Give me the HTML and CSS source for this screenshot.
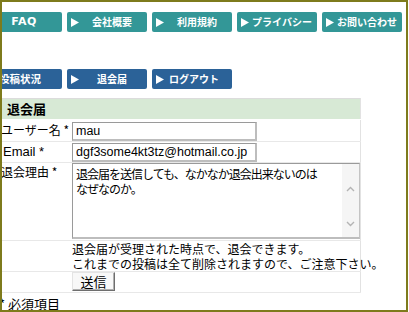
FILE: index.html
```html
<!DOCTYPE html>
<html lang="ja">
<head>
    <meta charset="UTF-8">
    <title>退会届</title>
    <link rel="stylesheet" href="styles.css">
</head>
<body>
    <div class="frame">
        <nav class="menu menu-main">
            <a class="menu-btn btn-teal btn-plain" href="#">FAQ</a>
            <a class="menu-btn btn-teal" href="#">
                <svg class="arrow" width="8" height="9" viewBox="0 0 8 9"><polygon points="0,0 8,4.5 0,9" fill="#fff"/></svg>
                <span class="menu-label">会社概要</span>
            </a>
            <a class="menu-btn btn-teal" href="#">
                <svg class="arrow" width="8" height="9" viewBox="0 0 8 9"><polygon points="0,0 8,4.5 0,9" fill="#fff"/></svg>
                <span class="menu-label">利用規約</span>
            </a>
            <a class="menu-btn btn-teal" href="#">
                <svg class="arrow" width="8" height="9" viewBox="0 0 8 9"><polygon points="0,0 8,4.5 0,9" fill="#fff"/></svg>
                <span class="menu-label">プライバシー</span>
            </a>
            <a class="menu-btn btn-teal" href="#">
                <svg class="arrow" width="8" height="9" viewBox="0 0 8 9"><polygon points="0,0 8,4.5 0,9" fill="#fff"/></svg>
                <span class="menu-label">お問い合わせ</span>
            </a>
        </nav>

        <nav class="menu menu-user">
            <a class="menu-btn btn-blue btn-left btn-first" href="#">
                <svg class="arrow" width="8" height="9" viewBox="0 0 8 9"><polygon points="0,0 8,4.5 0,9" fill="#fff"/></svg>
                <span class="menu-label">投稿状況</span>
            </a>
            <a class="menu-btn btn-blue" href="#">
                <svg class="arrow" width="8" height="9" viewBox="0 0 8 9"><polygon points="0,0 8,4.5 0,9" fill="#fff"/></svg>
                <span class="menu-label">退会届</span>
            </a>
            <a class="menu-btn btn-blue btn-left" href="#">
                <svg class="arrow" width="8" height="9" viewBox="0 0 8 9"><polygon points="0,0 8,4.5 0,9" fill="#fff"/></svg>
                <span class="menu-label">ログアウト</span>
            </a>
        </nav>

        <form class="quit-form" onsubmit="return false">
            <table class="form-table">
                <colgroup>
                    <col class="col-label">
                    <col class="col-field">
                </colgroup>
                <tr>
                    <th class="form-head" colspan="2">退会届</th>
                </tr>
                <tr class="row-user">
                    <td class="field-label">ユーザー名 *</td>
                    <td><input class="text-input" type="text" value="mau"></td>
                </tr>
                <tr class="row-email">
                    <td class="field-label label-latin">Email *</td>
                    <td><input class="text-input" type="text" value="dgf3some4kt3tz@hotmail.co.jp"></td>
                </tr>
                <tr class="row-reason">
                    <td class="field-label">退会理由 *</td>
                    <td>
                        <div class="reason-box">
                            <textarea class="reason-input">退会届を送信しても、なかなか退会出来ないのはな&#8203;ぜなのか。</textarea>
                            <div class="scroll-rail">
                                <svg width="9" height="6" viewBox="0 0 9 6"><path d="M1 5l3.5-3.5L8 5" fill="none" stroke="#b4b4b4" stroke-width="1.4"/></svg>
                                <svg width="9" height="6" viewBox="0 0 9 6"><path d="M1 1l3.5 3.5L8 1" fill="none" stroke="#b4b4b4" stroke-width="1.4"/></svg>
                            </div>
                        </div>
                    </td>
                </tr>
                <tr class="row-note">
                    <td></td>
                    <td class="form-note">
                        退会届が受理された時点で、退会できます。<br>
                        これまでの投稿は全て削除されますので、ご注意下さい。
                    </td>
                </tr>
                <tr class="row-submit">
                    <td></td>
                    <td><button class="submit-btn" type="submit">送信</button></td>
                </tr>
            </table>
            <p class="required-note">* 必須項目</p>
        </form>
    </div>
</body>
</html>
```

FILE: styles.css
```css
* {
    margin: 0;
    padding: 0;
    box-sizing: border-box;
}

body {
    font-family: "Liberation Sans", "Noto Sans CJK JP", sans-serif;
    background: #fff;
    color: #000;
}

.frame {
    width: 408px;
    height: 312px;
    border: 2px solid #7e7b1c;
    overflow: hidden;
}

/* navigation buttons */
.menu {
    display: flex;
    gap: 5px;
    margin-left: -20px;
}

.menu-main {
    margin-top: 10px;
}

.menu-user {
    margin-top: 37px;
}

.menu-btn {
    display: flex;
    align-items: center;
    width: 80px;
    height: 20px;
    padding-left: 4px;
    border-radius: 2px;
    color: #fff;
    text-decoration: none;
    font-family: "Noto Sans CJK JP", sans-serif;
    font-size: 10px;
    font-weight: bold;
    line-height: 20px;
}

.btn-teal {
    background: #339797;
}

.btn-blue {
    background: #2b6298;
}

.btn-plain {
    justify-content: center;
    padding-left: 4px;
    font-family: "DejaVu Sans", sans-serif;
    font-size: 11px;
    letter-spacing: 0.5px;
}

.arrow {
    flex: none;
}

.menu-label {
    flex: 1;
    text-align: center;
    padding-right: 2px;
    white-space: nowrap;
}

.btn-left .menu-label {
    text-align: left;
    padding-left: 5px;
}

.btn-first .menu-label {
    font-size: 10.5px;
}

/* form table */
.quit-form {
    margin-top: 9px;
    margin-left: -2px;
}

.form-table {
    width: 361px;
    table-layout: fixed;
    border-collapse: collapse;
    border-top: 1px solid #dcdcdc;
    border-right: 1px solid #e2e2e2;
}

.col-label {
    width: 72px;
}

.form-head {
    height: 20px;
    padding-left: 7px;
    background: #d7e9d5;
    border-bottom: 1px solid #fff;
    text-align: left;
    font-family: "Noto Sans CJK JP", sans-serif;
    font-size: 13px;
    font-weight: bold;
    line-height: 20px;
}

.form-table td {
    border-bottom: 1px solid #e8e8e8;
    vertical-align: top;
}

.field-label {
    font-family: "Noto Sans CJK JP", sans-serif;
    font-size: 12px;
    line-height: 16px;
    white-space: nowrap;
    padding-top: 3px;
    padding-left: 1px;
}

.label-latin {
    font-family: "Liberation Sans", sans-serif;
    font-size: 13px;
    padding-left: 3px;
}

.row-user td {
    padding-top: 2px;
}

.row-email td {
    padding-top: 1px;
}

.row-email .field-label {
    padding-top: 2px;
}

.row-reason td {
    padding-bottom: 1px;
}

.row-reason .field-label {
    padding-top: 1px;
}

.text-input {
    display: block;
    width: 185px;
    height: 19px;
    padding: 0 3px;
    border: 1px solid #9a9a9a;
    border-right: 2px solid #bdbdbd;
    border-bottom: 2px solid #bdbdbd;
    font-family: "Liberation Sans", sans-serif;
    font-size: 12.5px;
    color: #000;
    outline: none;
}

.reason-box {
    display: flex;
    width: 288px;
    height: 76px;
    border: 1px solid #9a9a9a;
    border-right-color: #c4c4c4;
    border-bottom: 2px solid #bdbdbd;
}

.reason-input {
    flex: 1;
    min-width: 0;
    padding: 2px 19px 0 3px;
    border: none;
    font-family: "Noto Sans CJK JP", sans-serif;
    font-size: 12px;
    letter-spacing: -1px;
    line-height: 15px;
    word-break: break-all;
    resize: none;
    overflow: hidden;
    outline: none;
    color: #000;
}

.scroll-rail {
    display: flex;
    flex-direction: column;
    justify-content: space-between;
    align-items: center;
    width: 17px;
    padding: 22px 0 10px;
    background: #f5f5f5;
}

.form-note {
    font-family: "Noto Sans CJK JP", sans-serif;
    font-size: 12px;
    line-height: 15px;
    white-space: nowrap;
}

.submit-btn {
    display: block;
    width: 43px;
    height: 19px;
    margin-bottom: 1px;
    background: #f8f8f8;
    border: 1px solid;
    border-color: #e4e4e4 #6e6e6e #6e6e6e #e4e4e4;
    box-shadow: inset -1px -1px #b0b0b0;
    font-family: "Noto Sans CJK JP", sans-serif;
    font-size: 13px;
    line-height: 16px;
    color: #000;
}

.required-note {
    margin-top: 3px;
    margin-left: -1px;
    font-family: "Noto Sans CJK JP", sans-serif;
    font-size: 13px;
    line-height: 16px;
}
```
